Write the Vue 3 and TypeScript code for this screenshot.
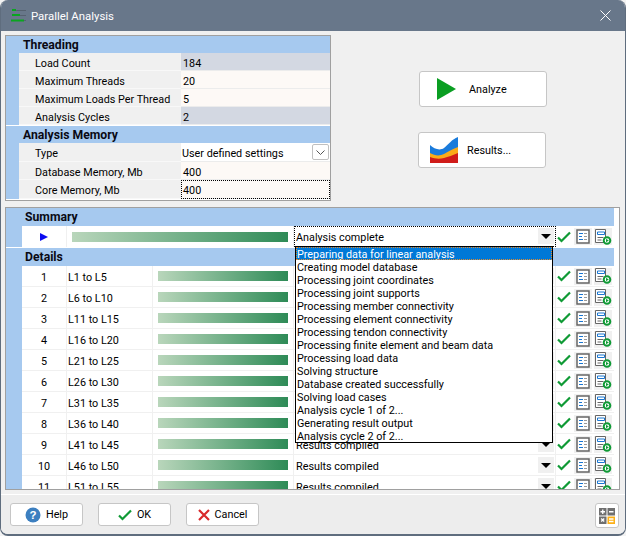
<script setup lang="ts">
const threading: { label: string; value: string; ro?: boolean }[] = [
  { label: 'Load Count', value: '184', ro: true },
  { label: 'Maximum Threads', value: '20' },
  { label: 'Maximum Loads Per Thread', value: '5' },
  { label: 'Analysis Cycles', value: '2', ro: true },
]
const rows = Array.from({ length: 11 }, (_, i) => ({
  n: i + 1,
  name: `L${i * 5 + 1} to L${i * 5 + 5}`,
}))
const options = [
  'Preparing data for linear analysis',
  'Creating model database',
  'Processing joint coordinates',
  'Processing joint supports',
  'Processing member connectivity',
  'Processing element connectivity',
  'Processing tendon connectivity',
  'Processing finite element and beam data',
  'Processing load data',
  'Solving structure',
  'Database created successfully',
  'Solving load cases',
  'Analysis cycle 1 of 2...',
  'Generating result output',
  'Analysis cycle 2 of 2...',
]
</script>

<template>
  <div class="window">
    <header class="titlebar">
      <svg class="title-icon" width="15" height="14" viewBox="0 0 15 14">
        <path d="M1 1.500h14M1 6.500h14M1 11.500h14" stroke="#55616f" stroke-width="1" fill="none" />
        <path d="M1 1h4M1 6h8M0 11.500h13" stroke="#0aa51f" stroke-width="2" fill="none" />
      </svg>
      <span class="title">Parallel Analysis</span>
      <svg class="close" width="11" height="11" viewBox="0 0 11 11">
        <path d="M.5.5l10 10M10.500.5l-10 10" stroke="#fff" stroke-width="1" fill="none" />
      </svg>
    </header>

    <main class="content">
      <section class="top">
        <div class="props">
          <div class="props-inner">
            <div class="group-head">Threading</div>
            <div v-for="r in threading" :key="r.label" class="prop">
              <span class="prop-label">{{ r.label }}</span>
              <span class="prop-value" :class="{ ro: r.ro }">{{ r.value }}</span>
            </div>
            <div class="group-gap"></div>
            <div class="group-head">Analysis Memory</div>
            <div class="prop tall">
              <span class="prop-label">Type</span>
              <span class="prop-value select">
                User defined settings
                <span class="chev">
                  <svg width="9" height="5" viewBox="0 0 9 5"><path d="M.5.5l4 4 4-4" stroke="#555" fill="none" /></svg>
                </span>
              </span>
            </div>
            <div class="prop">
              <span class="prop-label">Database Memory, Mb</span>
              <span class="prop-value">400</span>
            </div>
            <div class="prop tall">
              <span class="prop-label">Core Memory, Mb</span>
              <span class="prop-value focus">400</span>
            </div>
          </div>
        </div>

        <div class="actions">
          <button class="btn big analyze">
            <svg class="big-icon" width="19" height="22" viewBox="0 0 19 22"><path d="M0 0l19 11L0 22z" fill="#0a9e22" /></svg>
            <span>Analyze</span>
          </button>
          <button class="btn big results">
            <svg class="big-icon" width="28" height="26" viewBox="0 0 28 26">
              <path d="M0 8c4 4 10 6 14 3s8-9 14-11v14c-6 2-9 6-14 8-5 1-10-1-14-3z" fill="#1a7bdb" />
              <path d="M0 16c5 3 10 3 14 1s8-5 14-7v9c-5 2-9 4-14 4-5 1-10-1-14-2z" fill="#fbab18" />
              <path d="M0 20c5 2 10 2 14 1s9-3 14-5v10H0z" fill="#d01c1a" />
            </svg>
            <span>Results...</span>
          </button>
        </div>
      </section>

      <section class="grid-panel">
        <div class="grid-inner">
          <div class="band">Summary</div>
          <div class="row summary">
            <span class="c-sum"><span class="arrow"></span></span>
            <span class="c-bar wide"><span class="bar"></span></span>
            <span class="c-status focus-cell">
              Analysis complete
              <span class="drop"><span class="tri"></span></span>
            </span>
            <span class="c-icons">
              <svg class="check" width="14" height="12" viewBox="0 0 14 12"><path d="M1 6.500l3.500 3.500L13 1.500" stroke="#0f9a35" stroke-width="2.200" fill="none" /></svg>
              <span class="ico-box"><svg width="14" height="15" viewBox="0 0 14 15"><path d="M1 1h12v13H1z" stroke="#666" stroke-width="1.500" fill="#fff" /><path d="M3 4.500h4M3 7.500h3M3 10.500h4" stroke="#1976d2" fill="none" /><path d="M8 4.500h3M8 7.500h3M8 10.500h3" stroke="#999" fill="none" /></svg></span>
              <span class="ico-box"><svg width="18" height="16" viewBox="0 0 18 16"><path d="M1.500 .5h10v13h-10z" stroke="#666" fill="#fff" /><path d="M3.500 3h7v2.500h-7z" stroke="#1976d2" fill="#fff" /><path d="M3.500 8.500h6M3.500 11h4" stroke="#666" fill="none" /><circle cx="13" cy="11.500" r="3.300" fill="#fff" stroke="#0f9a35" stroke-width="2" /><path d="M12 9.700l2.800 1.800-2.800 1.800z" fill="#0f9a35" /></svg></span>
            </span>
          </div>
          <div class="band-gap"></div>
          <div class="band">Details</div>
          <div class="scroller">
            <div v-for="r in rows" :key="r.n" class="row">
              <span class="c-num">{{ r.n }}</span>
              <span class="c-name">{{ r.name }}</span>
              <span class="c-bar"><span class="bar"></span></span>
              <span class="c-status">
                Results compiled
                <span class="drop"><span class="tri"></span></span>
              </span>
              <span class="c-icons">
                <svg class="check" width="14" height="12" viewBox="0 0 14 12"><path d="M1 6.500l3.500 3.500L13 1.500" stroke="#0f9a35" stroke-width="2.200" fill="none" /></svg>
                <span class="ico-box"><svg width="14" height="15" viewBox="0 0 14 15"><path d="M1 1h12v13H1z" stroke="#666" stroke-width="1.500" fill="#fff" /><path d="M3 4.500h4M3 7.500h3M3 10.500h4" stroke="#1976d2" fill="none" /><path d="M8 4.500h3M8 7.500h3M8 10.500h3" stroke="#999" fill="none" /></svg></span>
                <span class="ico-box"><svg width="18" height="16" viewBox="0 0 18 16"><path d="M1.500 .5h10v13h-10z" stroke="#666" fill="#fff" /><path d="M3.500 3h7v2.500h-7z" stroke="#1976d2" fill="#fff" /><path d="M3.500 8.500h6M3.500 11h4" stroke="#666" fill="none" /><circle cx="13" cy="11.500" r="3.300" fill="#fff" stroke="#0f9a35" stroke-width="2" /><path d="M12 9.700l2.800 1.800-2.800 1.800z" fill="#0f9a35" /></svg></span>
              </span>
            </div>
          </div>
        </div>
        <ul class="dropdown">
          <li v-for="(o, i) in options" :key="o" :class="{ sel: i === 0 }">{{ o }}</li>
        </ul>
      </section>
    </main>

    <footer class="footer">
      <button class="btn small help">
        <svg width="16" height="16" viewBox="0 0 16 16"><circle cx="8" cy="8" r="7.500" fill="#3c7fc0" /><text x="8" y="12" text-anchor="middle" font-size="11.500" font-weight="700" fill="#fff" font-family="Liberation Sans, sans-serif">?</text></svg>
        <span>Help</span>
      </button>
      <button class="btn small">
        <svg width="14" height="12" viewBox="0 0 14 12"><path d="M1 6.500l3.500 3.500L13 1.500" stroke="#0f9a35" stroke-width="2.200" fill="none" /></svg>
        <span>OK</span>
      </button>
      <button class="btn small">
        <svg width="12" height="12" viewBox="0 0 12 12"><path d="M1 1l10 10M11 1L1 11" stroke="#d9292b" stroke-width="2.200" fill="none" /></svg>
        <span>Cancel</span>
      </button>
      <button class="btn calc">
        <svg width="16" height="16" viewBox="0 0 16 16">
          <path d="M0 0h7.500v7.500H0zM8.500 0H16v7.500H8.500zM0 8.500h7.500V16H0z" fill="#6f6f6f" />
          <path d="M8.500 8.500H16V16H8.500z" fill="#fcb018" />
          <path d="M1.500 3.750h4.500M3.750 1.500v4.500M10 3.750h4.500M10 11h4.500M10 13.500h4.500M2.200 10.500l3 3M5.200 10.500l-3 3" stroke="#fff" stroke-width="1.300" fill="none" />
        </svg>
      </button>
    </footer>
  </div>
</template>

<style scoped>
.window {
  width: 626px;
  height: 536px;
  box-sizing: border-box;
  display: flex;
  flex-direction: column;
  background: #f0f0f0;
  border-radius: 8px;
  border-left: 1px solid #5f6d7e;
  border-right: 1px solid #5f6d7e;
  border-bottom: 2px solid #5f6d7e;
  overflow: hidden;
  font-family: Roboto, "Liberation Sans", sans-serif;
  font-size: 10.8px;
  color: #000;
}
.titlebar {
  height: 31px;
  flex: none;
  background: #68778a;
  display: flex;
  align-items: center;
  padding: 0 14px 0 10px;
  color: #fff;
  font-size: 11.4px;
}
.title-icon { margin-right: 5px; }
.title { flex: 1; }
.content {
  flex: 1;
  min-height: 0;
  display: flex;
  flex-direction: column;
  padding: 4px 5px 0 4px;
}
.top {
  display: flex;
  height: 172px;
  flex: none;
}
.props {
  width: 326px;
  height: 166px;
  box-sizing: border-box;
  border: 1px solid #a0a0a0;
  background: #fff;
}
.props-inner {
  background: #a6c9ef;
  padding-left: 13px;
}
.group-head {
  height: 17px;
  line-height: 19px;
  font-size: 12.200px;
  font-weight: 700;
  padding-left: 4px;
  color: #0a0a14;
}
.group-gap {
  height: 1px;
  background: #fff;
  margin-left: -13px;
}
.prop {
  display: flex;
  height: 18px;
  line-height: 21px;
  background: #fff;
  white-space: nowrap;
}
.prop.tall { height: 19px; line-height: 22px; }
.prop-label {
  width: 162px;
  flex: none;
  box-sizing: border-box;
  padding-left: 16px;
  background: #f0f0f0;
  border-bottom: 1px solid #f8f8f8;
}
.prop-value {
  flex: 1;
  padding-left: 2px;
  background: #fdf9f6;
  border-bottom: 1px solid #ececec;
  position: relative;
}
.prop-value.ro { background: #d3d8e2; }
.prop-value.select { background: #fff; padding-left: 1px; }
.prop-value.focus { outline: 1px dotted #000; outline-offset: -1px; }
.chev {
  position: absolute;
  right: 1px;
  top: 1px;
  width: 17px;
  height: 16px;
  box-sizing: border-box;
  border: 1px solid #c0c0c0;
  border-radius: 2px;
  display: flex;
  align-items: center;
  justify-content: center;
}
.actions {
  flex: 1;
  display: flex;
  flex-direction: column;
  align-items: flex-start;
  padding: 36px 0 0 87px;
  gap: 25px;
}
.btn {
  font: inherit;
  color: inherit;
  background: #fff;
  border: 1px solid #c6c6c6;
  border-radius: 3px;
  box-sizing: border-box;
  display: flex;
  align-items: center;
  padding: 0;
}
.big { width: 128px; height: 36px; }
.analyze { margin-left: 1px; }
.analyze .big-icon { margin: 0 13px 0 17px; }
.results .big-icon { margin: 0 9px 0 11px; }
.grid-panel {
  position: relative;
  height: 283px;
  width: 615px;
  flex: none;
  box-sizing: border-box;
  border: 1px solid #a0a0a0;
  background: #fff;
}
.grid-inner {
  width: 608px;
  height: 100%;
  display: flex;
  flex-direction: column;
  background: #a6c9ef;
}
.band {
  height: 18px;
  line-height: 19px;
  font-size: 12.200px;
  font-weight: 700;
  padding-left: 19px;
  flex: none;
  color: #0a0a14;
}
.band-gap { height: 1px; background: #fff; flex: none; }
.scroller {
  flex: 1;
  min-height: 0;
  overflow: hidden;
  padding-left: 16px;
}
.row {
  display: flex;
  height: 21px;
  box-sizing: border-box;
  background: #fff;
  border-bottom: 1px solid #f0f0f0;
  line-height: 23px;
}
.row.summary {
  margin-left: 16px;
  border-bottom: none;
  flex: none;
}
.c-sum {
  width: 45px;
  flex: none;
  display: flex;
  align-items: center;
  justify-content: center;
  border-right: 1px solid #f0f0f0;
  box-sizing: border-box;
}
.arrow {
  width: 0;
  height: 0;
  border-left: 8px solid #0c0cf0;
  border-top: 4px solid transparent;
  border-bottom: 4px solid transparent;
}
.c-num {
  width: 45px;
  flex: none;
  text-align: center;
  border-right: 1px solid #f0f0f0;
  box-sizing: border-box;
}
.c-name {
  width: 86px;
  flex: none;
  padding-left: 1px;
  border-right: 1px solid #f0f0f0;
  box-sizing: border-box;
}
.c-bar {
  width: 141px;
  flex: none;
  display: flex;
  align-items: center;
  padding: 0 5px;
  box-sizing: border-box;
  border-right: 1px solid #f0f0f0;
}
.c-bar.wide { width: 227px; }
.bar {
  display: block;
  width: 100%;
  height: 10px;
  background: linear-gradient(90deg, #b9d6bb, #2e8b57);
}
.c-status {
  width: 262px;
  flex: none;
  padding-left: 2px;
  box-sizing: border-box;
  position: relative;
  border-right: 1px solid #f0f0f0;
}
.focus-cell { outline: 1px dotted #000; outline-offset: -1px; }
.drop {
  position: absolute;
  right: 1px;
  top: 2px;
  width: 16px;
  height: 16px;
  background: #f0f0f0;
  display: flex;
  align-items: center;
  justify-content: center;
}
.tri {
  width: 0;
  height: 0;
  border-top: 5px solid #000;
  border-left: 5px solid transparent;
  border-right: 5px solid transparent;
}
.c-icons {
  flex: 1;
  display: flex;
  align-items: center;
  padding-left: 1px;
}
.check { margin-right: 3px; }
.ico-box {
  width: 18px;
  height: 17px;
  background: #f0f0f0;
  display: flex;
  align-items: center;
  justify-content: center;
  margin-right: 2px;
}
.dropdown {
  position: absolute;
  left: 289px;
  top: 38px;
  width: 258px;
  height: 197px;
  margin: 0;
  padding: 0;
  box-sizing: border-box;
  list-style: none;
  background: #fff;
  border: 1px solid #000;
}
.dropdown li {
  height: 13px;
  line-height: 15px;
  padding-left: 1px;
  white-space: nowrap;
}
.dropdown li.sel {
  background: #0078d7;
  color: #fff;
  outline: 1px dotted #e58a2a;
  outline-offset: -1px;
}
.footer {
  height: 40px;
  flex: none;
  box-sizing: border-box;
  border-top: 1px solid #fff;
  display: flex;
  align-items: flex-start;
  padding: 8px 6px 0 9px;
  gap: 15px;
  background: #ededed;
}
.small {
  width: 73px;
  height: 23px;
  justify-content: center;
  gap: 5px;
}
.calc {
  margin-left: auto;
  width: 24px;
  height: 25px;
  justify-content: center;
}
</style>

<style>
html, body { margin: 0; background: #f3f3f3; overflow: hidden; }
</style>
